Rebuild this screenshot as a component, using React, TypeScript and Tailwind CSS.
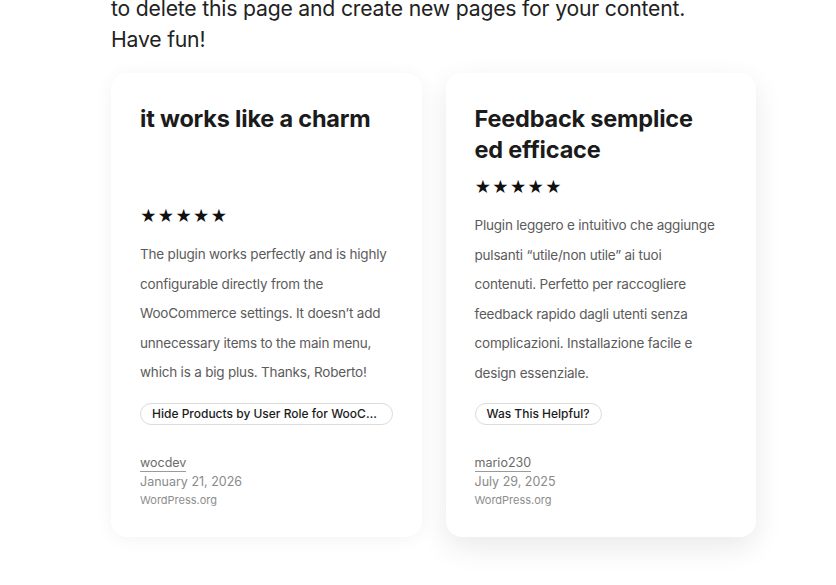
import React from "react";

type Review = {
  title: string;
  titleH: string;
  body: string[];
  pill: string;
  author: string;
  date: string;
  shadow: string;
};

const reviews: Review[] = [
  {
    title: "it works like a charm",
    titleH: "h-[91px]",
    body: [
      "The plugin works perfectly and is highly",
      "configurable directly from the",
      "WooCommerce settings. It doesn\u2019t add",
      "unnecessary items to the main menu,",
      "which is a big plus. Thanks, Roberto!",
    ],
    pill: "Hide Products by User Role for WooCommerce",
    author: "wocdev",
    date: "January 21, 2026",
    shadow: "shadow-[0_2px_18px_rgba(0,0,0,0.05)]",
  },
  {
    title: "Feedback semplice ed efficace",
    titleH: "h-[62px]",
    body: [
      "Plugin leggero e intuitivo che aggiunge",
      "pulsanti \u201cutile/non utile\u201d ai tuoi",
      "contenuti. Perfetto per raccogliere",
      "feedback rapido dagli utenti senza",
      "complicazioni. Installazione facile e",
      "design essenziale.",
    ],
    pill: "Was This Helpful?",
    author: "mario230",
    date: "July 29, 2025",
    shadow: "shadow-[0_10px_30px_rgba(0,0,0,0.09)]",
  },
];

function Card({ r }: { r: Review }) {
  return (
    <div
      className={`flex flex-col rounded-2xl bg-white pl-[29px] pr-[28px] pt-[30px] pb-[28px] ${r.shadow}`}
    >
      <div className={r.titleH}>
        <h3 className="max-w-[236px] text-[23.5px] font-bold leading-[31px] tracking-[-0.2px] text-[#1b1b1b]">
          {r.title}
        </h3>
      </div>
      <div className="mt-[12px] flex h-[20px] items-center gap-0 text-[16px] leading-none text-[#111]">
        <span className="w-[17.6px]">★</span>
        <span className="w-[17.6px]">★</span>
        <span className="w-[17.6px]">★</span>
        <span className="w-[17.6px]">★</span>
        <span className="w-[17.6px]">★</span>
      </div>
      <p className="mt-[14px] text-[13.5px] leading-[29.5px] tracking-[-0.2px] text-[#5b5b5b]">
        {r.body.map((line) => (
          <span key={line} className="block whitespace-nowrap">
            {line}
          </span>
        ))}
      </p>
      <div className="mt-[15px] flex">
        <span className="max-w-[253px] truncate rounded-full border border-[#dcdcdc] px-[11px] py-[2px] text-[12px] font-medium leading-[16px] text-[#1b1b1b]">
          {r.pill}
        </span>
      </div>
      <div className="mt-auto flex flex-col pt-[29px]">
        <span className="self-start border-b border-[#9a9a9a] text-[12.5px] leading-[17px] text-[#6b6b6b]">
          {r.author}
        </span>
        <span className="mt-[1px] text-[12.5px] leading-[18px] text-[#8a8a8a]">
          {r.date}
        </span>
        <span className="text-[11px] leading-[18px] text-[#8d8d8d]">
          WordPress.org
        </span>
      </div>
    </div>
  );
}

export default function App() {
  return (
    <div
      className="h-[585px] w-[836px] overflow-hidden bg-white"
      style={{ fontFamily: "Inter, 'Noto Sans', sans-serif" }}
    >
      <div className="ml-[111px] w-[645px]">
        <p className="-mt-[7px] text-[21.2px] leading-[31px] tracking-[-0.2px] text-[#222]">
          to delete this page and create new pages for your content.
          <br />
          Have fun!
        </p>
        <div className="mt-[18px] grid grid-cols-2 gap-[24px]">
          {reviews.map((r) => (
            <Card key={r.author} r={r} />
          ))}
        </div>
      </div>
    </div>
  );
}
